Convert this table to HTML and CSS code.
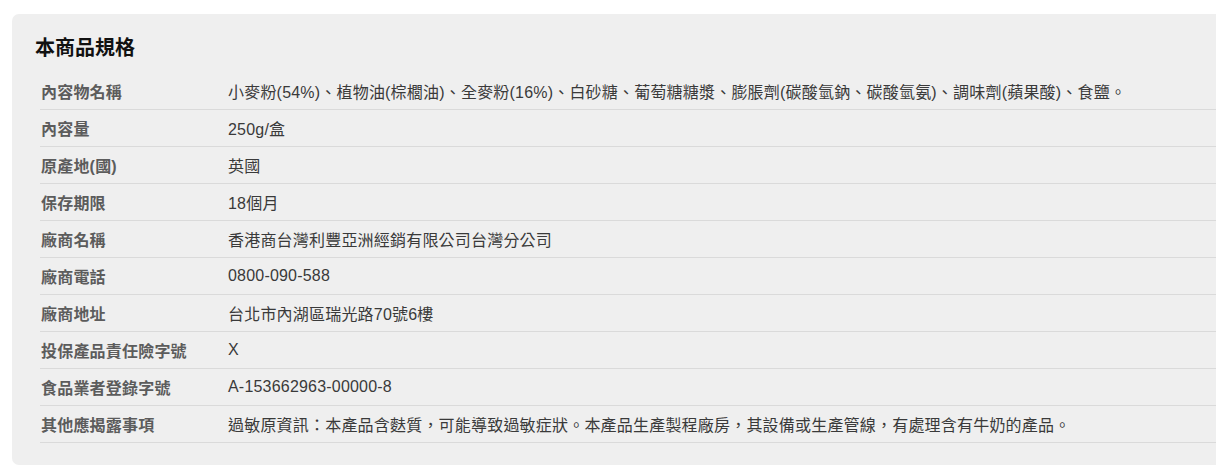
FILE: index.html
```html
<!DOCTYPE html>
<html lang="zh-Hant">
<head>
<meta charset="utf-8">
<title>本商品規格</title>
<link rel="stylesheet" href="styles.css">
</head>
<body>
<div class="page">
  <section class="spec">
    <h2 class="spec-title">本商品規格</h2>
    <div class="spec-table">
      <div class="row"><div class="label">內容物名稱</div><div class="value">小麥粉(54%)、植物油(棕櫚油)、全麥粉(16%)、白砂糖、葡萄糖糖漿、膨脹劑(碳酸氫鈉、碳酸氫氨)、調味劑(蘋果酸)、食鹽。</div></div>
      <div class="row"><div class="label">內容量</div><div class="value">250g/盒</div></div>
      <div class="row"><div class="label">原產地(國)</div><div class="value">英國</div></div>
      <div class="row"><div class="label">保存期限</div><div class="value">18個月</div></div>
      <div class="row"><div class="label">廠商名稱</div><div class="value">香港商台灣利豐亞洲經銷有限公司台灣分公司</div></div>
      <div class="row"><div class="label">廠商電話</div><div class="value">0800-090-588</div></div>
      <div class="row"><div class="label">廠商地址</div><div class="value">台北市內湖區瑞光路70號6樓</div></div>
      <div class="row"><div class="label">投保產品責任險字號</div><div class="value">X</div></div>
      <div class="row"><div class="label">食品業者登錄字號</div><div class="value">A-153662963-00000-8</div></div>
      <div class="row"><div class="label">其他應揭露事項</div><div class="value">過敏原資訊：本產品含麩質，可能導致過敏症狀。本產品生產製程廠房，其設備或生產管線，有處理含有牛奶的產品。</div></div>
    </div>
  </section>
</div>
</body>
</html>
```
FILE: styles.css
```css
html, body {
  margin: 0;
  padding: 0;
  background: #ffffff;
  overflow: hidden;
}
body {
  font-family: "Liberation Sans", "Noto Sans CJK TC", sans-serif;
}
.page {
  padding: 14px 0 0 12px;
  width: 1260px;
}
.spec {
  background: #efefef;
  border-radius: 7px;
  padding: 20px 0 22px 23px;
}
.spec-title {
  margin: 0 0 11px 0;
  font-size: 20px;
  line-height: 28px;
  font-weight: 700;
  color: #111111;
}
.spec-table {
  margin-left: 5px;
}
.row {
  display: flex;
  align-items: center;
  height: 36px;
  border-bottom: 1px solid #dadada;
}
.label {
  width: 187px;
  padding-left: 1px;
  flex: none;
  font-size: 16px;
  font-weight: 700;
  color: #5c5c5c;
  letter-spacing: 0.2px;
}
.value {
  font-size: 16px;
  color: #3a3a3a;
  white-space: nowrap;
  letter-spacing: 0.2px;
}
```
